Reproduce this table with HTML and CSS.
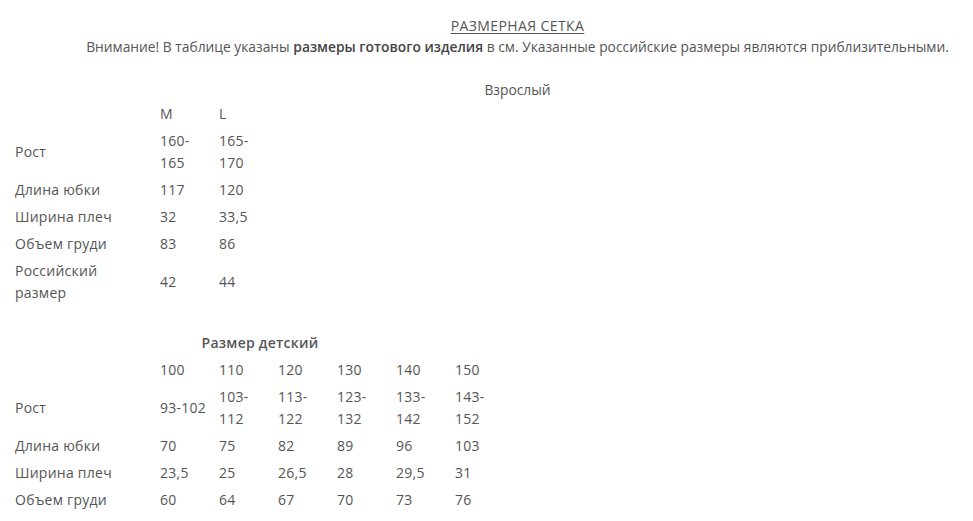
FILE: index.html
```html
<!DOCTYPE html>
<html lang="ru">
<head>
<meta charset="utf-8">
<title>Размерная сетка</title>
<link rel="stylesheet" href="styles.css">
</head>
<body>
<div class="sheet">
  <div class="intro">
    <div class="title">РАЗМЕРНАЯ СЕТКА</div>
    <div class="notice">Внимание! В таблице указаны <b>размеры готового изделия</b> в см. Указанные российские размеры являются приблизительными.</div>
    <div class="group">Взрослый</div>
  </div>

  <table class="sizes">
    <tr><td class="lbl"></td><td>M</td><td>L</td></tr>
    <tr><td class="lbl">Рост</td><td>160-165</td><td>165-170</td></tr>
    <tr><td class="lbl">Длина юбки</td><td>117</td><td>120</td></tr>
    <tr><td class="lbl">Ширина плеч</td><td>32</td><td>33,5</td></tr>
    <tr><td class="lbl">Объем груди</td><td>83</td><td>86</td></tr>
    <tr><td class="lbl">Российский размер</td><td>42</td><td>44</td></tr>
  </table>

  <table class="sizes kids">
    <caption>Размер детский</caption>
    <tr><td class="lbl"></td><td>100</td><td>110</td><td>120</td><td>130</td><td>140</td><td>150</td></tr>
    <tr><td class="lbl">Рост</td><td>93-102</td><td>103-112</td><td>113-122</td><td>123-132</td><td>133-142</td><td>143-152</td></tr>
    <tr><td class="lbl">Длина юбки</td><td>70</td><td>75</td><td>82</td><td>89</td><td>96</td><td>103</td></tr>
    <tr><td class="lbl">Ширина плеч</td><td>23,5</td><td>25</td><td>26,5</td><td>28</td><td>29,5</td><td>31</td></tr>
    <tr><td class="lbl">Объем груди</td><td>60</td><td>64</td><td>67</td><td>70</td><td>73</td><td>76</td></tr>
  </table>
</div>
</body>
</html>
```
FILE: styles.css
```css
html, body {
  background: #ffffff;
}
body {
  margin: 8px;
  font-family: "Open Sans", "Noto Sans", sans-serif;
  color: #555555;
  font-size: 14px;
}
.intro {
  margin-left: 62px;
  text-align: center;
  font-size: 13.8px;
}
.title {
  padding-top: 8px;
  line-height: 20px;
  font-size: 14px;
  letter-spacing: 0.4px;
  text-decoration: underline;
  text-underline-offset: 2px;
}
.notice {
  line-height: 20px;
  margin-top: 1px;
}
.notice b {
  font-weight: 600;
  color: #444444;
}
.group {
  margin-top: 23px;
  line-height: 20px;
}
.sizes {
  border-collapse: collapse;
  table-layout: fixed;
  letter-spacing: 0.25px;
}
.sizes td {
  padding: 2.5px 2px 2.5px 7px;
  line-height: 22px;
  width: 50px;
  vertical-align: middle;
  text-align: left;
}
.sizes td.lbl {
  width: 129px;
  padding-right: 9px;
}
.kids {
  margin-top: 26px;
}
.kids caption {
  font-weight: 600;
  color: #555555;
  line-height: 22px;
  padding: 0 0 2px 5px;
}
```
